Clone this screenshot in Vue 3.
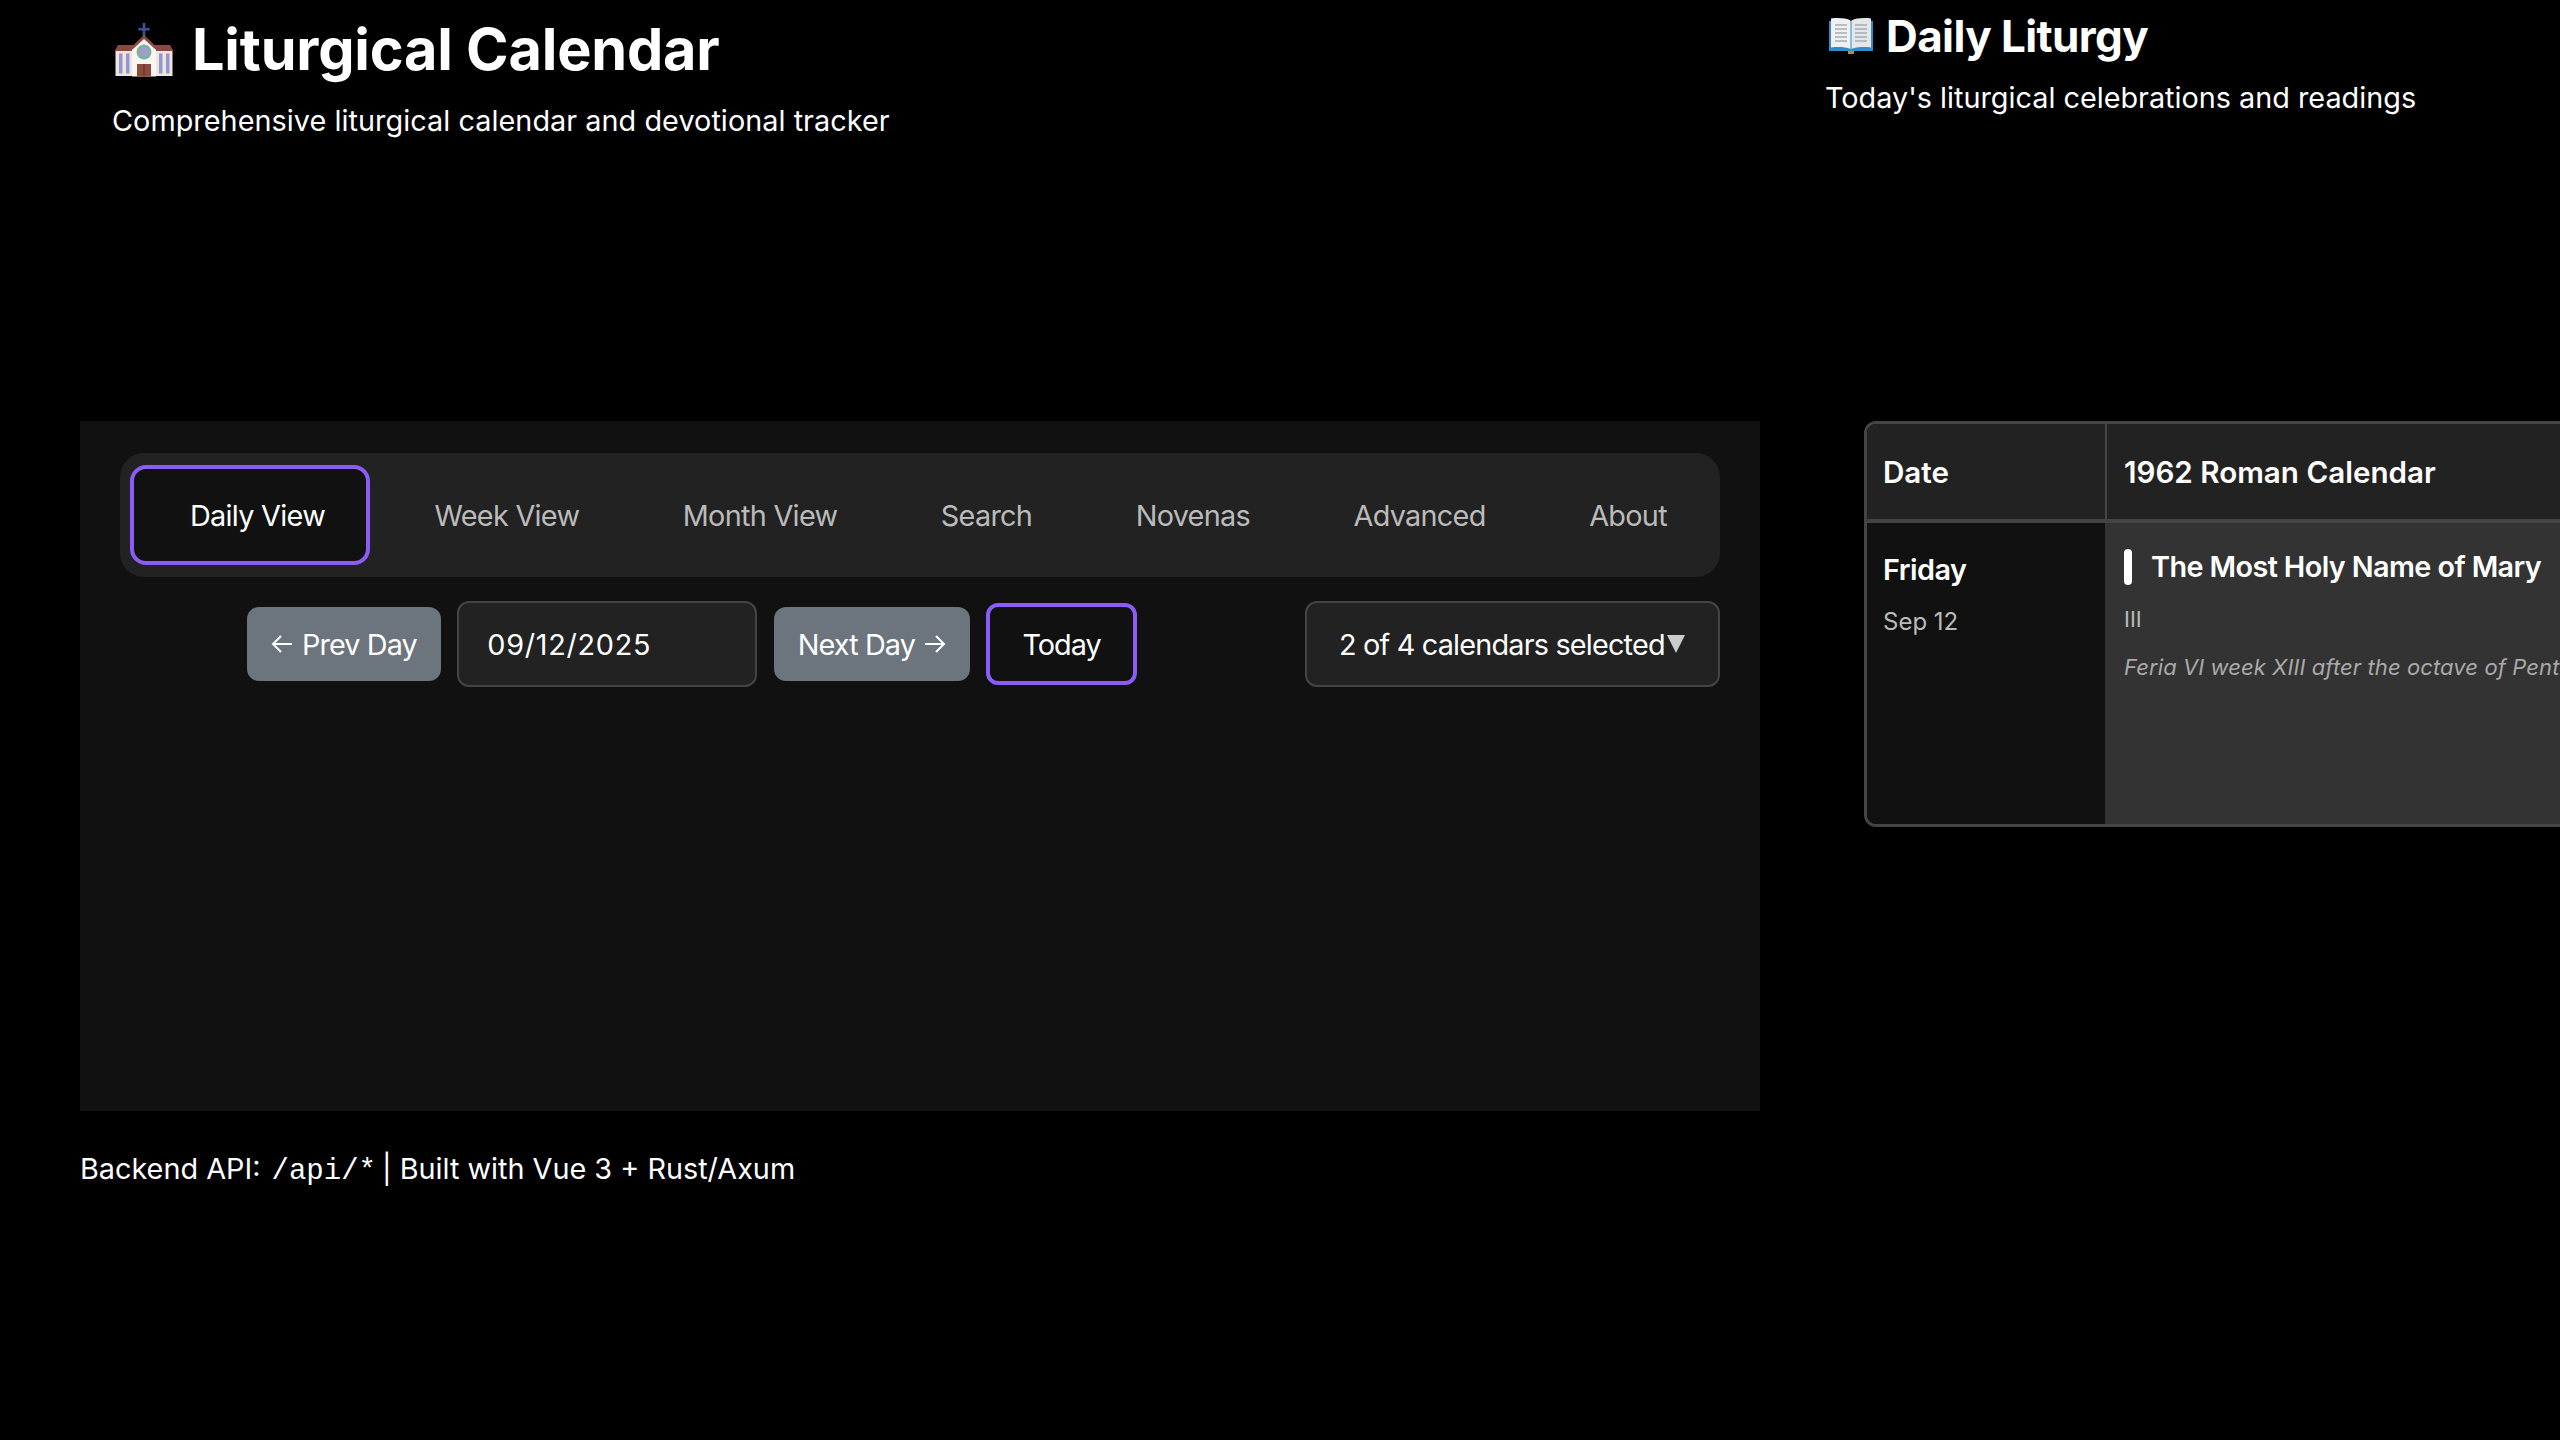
<template>
  <div class="page">
    <!-- columna principal -->
    <section class="main-col">
      <header class="main-header">
        <h1>
          <svg class="church" viewBox="8 6 64 62" width="64" height="62" aria-hidden="true">
            <path d="M38.6 8h2.8v5h4.4v2.6h-4.4V22h-2.8v-6.4h-4.4V13h4.4z" fill="#3c4f8f" />
            <rect x="11.5" y="35" width="18" height="26" fill="#efe6da" />
            <rect x="50.5" y="35" width="18" height="26" fill="#efe6da" />
            <path d="M14 30h16v6H10.5z" fill="#8a4a42" />
            <path d="M66 30H50v6h19.5z" fill="#8a4a42" />
            <path d="M28 32 40 21l12 11v29.500H28z" fill="#fbf6ee" />
            <path d="M40 20 26.500 33l2 1.500L40 24l11.500 10.500 2-1.500z" fill="#8a4a42" />
            <circle cx="40" cy="37" r="7.500" fill="#7fb0ac" />
            <circle cx="40" cy="37" r="4" fill="#a59ccb" />
            <rect x="33" y="49" width="14" height="12.500" fill="#8c4a3e" />
            <rect x="39.500" y="49" width="1" height="12.500" fill="#5d2620" />
            <rect x="15" y="38.500" width="3.500" height="20" fill="#9296d8" />
            <rect x="22" y="38.500" width="3.500" height="20" fill="#9296d8" />
            <rect x="55" y="38.500" width="3.500" height="20" fill="#9296d8" />
            <rect x="62" y="38.500" width="3.500" height="20" fill="#9296d8" />
          </svg>
          Liturgical Calendar
        </h1>
        <p>Comprehensive liturgical calendar and devotional tracker</p>
      </header>

      <div class="panel">
        <nav class="tabs">
          <button
            v-for="tab in tabs"
            :key="tab"
            class="tab"
            :class="{ active: tab === activeTab }"
          >{{ tab }}</button>
        </nav>

        <div class="controls">
          <div class="date-nav">
            <button class="btn-gray">
              <svg class="arrow" viewBox="0 0 22 22" width="22" height="22" aria-hidden="true"><path d="M21 11H2M10 3l-8 8 8 8" /></svg>
              Prev Day
            </button>
            <div class="date-input">09/12/2025</div>
            <button class="btn-gray">
              Next Day
              <svg class="arrow" viewBox="0 0 22 22" width="22" height="22" aria-hidden="true"><path d="M1 11h19M12 3l8 8-8 8" /></svg>
            </button>
            <button class="btn-today">Today</button>
          </div>
          <div class="cal-select">
            <span>2 of 4 calendars selected</span>
            <span class="caret"></span>
          </div>
        </div>
      </div>

      <footer class="main-footer">
        Backend API: <code>/api/*</code> | Built with Vue 3 + Rust/Axum
      </footer>
    </section>

    <!-- columna derecha -->
    <aside class="side-col">
      <header class="side-header">
        <h2>
          <svg class="book" viewBox="0 0 46 38" width="46" height="38" aria-hidden="true">
            <path d="M1 4h44v30H26l-1.500 3h-3L20 34H1z" fill="#2f8fc4" />
            <path d="M3 1.500c7-1 15-.5 19.500 2V32C18 30 10 29.500 3 30.500z" fill="#eef0f2" />
            <path d="M43 1.500c-7-1-15-.5-19.500 2V32C28 30 36 29.500 43 30.500z" fill="#e4e6e9" />
            <path d="M7 8h12M7 12h12M7 16h12M7 20h12M7 24h12M27 8h12M27 12h12M27 16h12M27 20h12M27 24h12" stroke="#a8abb0" stroke-width="1.500" />
            <rect x="20" y="34" width="6" height="3" fill="#b08f3c" />
          </svg>
          Daily Liturgy
        </h2>
        <p>Today's liturgical celebrations and readings</p>
      </header>

      <div class="liturgy-table">
        <div class="head-cell date-col">Date</div>
        <div class="head-cell cal-col">1962 Roman Calendar</div>
        <div class="day-cell">
          <div class="weekday">Friday</div>
          <div class="day-date">Sep 12</div>
        </div>
        <div class="feast-cell">
          <div class="feast-title">
            <span class="feast-bar"></span>
            The Most Holy Name of Mary
          </div>
          <div class="feast-rank">III</div>
          <div class="feast-note">Feria VI week XIII after the octave of Pentecost</div>
        </div>
      </div>
    </aside>
  </div>
</template>

<script setup>
import { ref } from 'vue';

const tabs = ['Daily View', 'Week View', 'Month View', 'Search', 'Novenas', 'Advanced', 'About'];
const activeTab = ref('Daily View');
</script>

<style>
html, body {
  background: #000;
  overflow: hidden;
}
</style>

<style scoped>
.page {
  display: flex;
  width: 2560px;
  height: 1440px;
  overflow: hidden;
  background: #000;
  color: #fff;
  font-family: Inter, "Liberation Sans", sans-serif;
}

.main-col {
  flex: none;
  width: 1680px;
  margin-left: 80px;
}

.main-header {
  height: 421px;
  padding: 14px 0 0 32px;
  box-sizing: border-box;
}
.main-header h1 {
  display: flex;
  align-items: center;
  gap: 16px;
  margin: 0;
  font-size: 57.6px;
  font-weight: 700;
  letter-spacing: -0.2px;
  line-height: 70px;
}
.church {
  margin: 3px 0 -3px;
}
.main-header p {
  margin: 17px 0 0;
  font-size: 28.8px;
  letter-spacing: 0.05px;
  line-height: 40px;
}

.panel {
  height: 690px;
  padding: 32px 40px;
  box-sizing: border-box;
  background: #111;
}

.tabs {
  display: flex;
  gap: 25.5px;
  height: 124px;
  padding: 12px 4px 12px 10px;
  box-sizing: border-box;
  background: #222;
  border-radius: 24px;
}
.tab {
  padding: 0 35px;
  border: 4px solid transparent;
  border-radius: 16px;
  background: none;
  color: #bbb;
  font: 400 28.8px Inter, sans-serif;
  letter-spacing: -0.7px;
  white-space: nowrap;
}
.tab.active {
  padding: 0 41px 0 56px;
  border-color: #8b5cf6;
  background: #111;
  color: #fff;
}

.controls {
  display: flex;
  align-items: center;
  justify-content: space-between;
  margin-top: 24px;
  padding-left: 127px;
}
.date-nav {
  display: flex;
  align-items: center;
  gap: 16.5px;
}
.btn-gray {
  display: flex;
  align-items: center;
  gap: 9px;
  height: 74px;
  padding: 0 24px;
  border: none;
  border-radius: 12px;
  background: #6c757d;
  color: #fff;
  font: 400 28.8px Inter, sans-serif;
  letter-spacing: -0.9px;
}
.arrow {
  fill: none;
  stroke: #fff;
  stroke-width: 2;
}
.date-input {
  display: flex;
  align-items: center;
  width: 300px;
  height: 86px;
  padding-left: 28px;
  box-sizing: border-box;
  border: 2px solid #444;
  border-radius: 12px;
  background: #222;
  font-size: 28.8px;
  letter-spacing: 0.7px;
}
.btn-today {
  height: 82px;
  padding: 0 32px;
  border: 4px solid #8b5cf6;
  border-radius: 12px;
  background: #111;
  color: #fff;
  font: 400 28.8px Inter, sans-serif;
  letter-spacing: -1px;
}
.cal-select {
  display: flex;
  align-items: center;
  width: 415px;
  height: 86px;
  padding-left: 32px;
  box-sizing: border-box;
  border: 2px solid #444;
  border-radius: 12px;
  background: #222;
  font-size: 28.8px;
  letter-spacing: -0.8px;
  white-space: nowrap;
}
.caret {
  width: 0;
  height: 0;
  margin-left: 2px;
  border-left: 9px solid transparent;
  border-right: 9px solid transparent;
  border-top: 18px solid #ccc;
}

.main-footer {
  margin-top: 38px;
  font-size: 28.8px;
  line-height: 40px;
}
.main-footer code {
  margin: 0 -2px 0 3px;
  font-family: "Liberation Mono", monospace;
  font-size: 29px;
}

.side-col {
  flex: none;
  width: 800px;
  margin-left: 64px;
}
.side-header {
  height: 421px;
  padding-left: 1px;
  box-sizing: border-box;
}
.side-header h2 {
  display: flex;
  align-items: center;
  gap: 12px;
  margin: 0;
  padding-top: 8px;
  font-size: 44px;
  font-weight: 700;
  letter-spacing: -0.6px;
  line-height: 56px;
}
.book {
  margin-left: 3px;
}
.side-header p {
  margin: 14px 0 0;
  font-size: 28.8px;
  line-height: 40px;
}

.liturgy-table {
  display: grid;
  grid-template-columns: 238px 802px;
  grid-template-rows: 99px 301px;
  width: 1043px;
  margin-left: 40px;
  box-sizing: border-box;
  border: 3px solid #444;
  border-radius: 12px;
  overflow: hidden;
}
.head-cell {
  display: flex;
  align-items: center;
  padding-left: 16px;
  background: #222;
  border-bottom: 4px solid #444;
  font-size: 29.6px;
  font-weight: 600;
}
.cal-col {
  padding-left: 17px;
  border-left: 2px solid #444;
}
.day-cell {
  padding: 27px 16px;
  background: #111;
}
.weekday {
  font-size: 28.8px;
  font-weight: 600;
  letter-spacing: -0.5px;
  line-height: 40px;
}
.day-date {
  margin-top: 17px;
  color: #bbb;
  font-size: 24px;
  line-height: 30px;
}
.feast-cell {
  padding: 26px 19px;
  background: #333;
}
.feast-title {
  display: flex;
  align-items: center;
  gap: 19px;
  font-size: 28.8px;
  font-weight: 600;
  letter-spacing: -0.6px;
  line-height: 36px;
}
.feast-bar {
  width: 8px;
  height: 36px;
  border-radius: 4px;
  background: #fff;
}
.feast-rank {
  margin-top: 21px;
  color: #bbb;
  font-size: 22px;
  line-height: 26px;
}
.feast-note {
  margin-top: 21px;
  color: #aaa;
  font-size: 22px;
  font-style: italic;
  letter-spacing: 0.1px;
  line-height: 28px;
  white-space: nowrap;
}
</style>
